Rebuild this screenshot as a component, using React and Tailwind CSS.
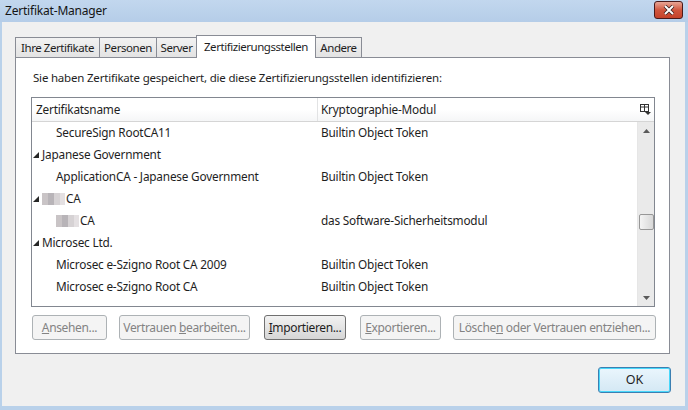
import React from "react"

const rows = [
  { level: 1, name: "SecureSign RootCA11", mod: "Builtin Object Token" },
  { level: 0, name: "Japanese Government", mod: "" },
  { level: 1, name: "ApplicationCA - Japanese Government", mod: "Builtin Object Token" },
  { level: 0, name: "CA", blur: true, mod: "" },
  { level: 1, name: "CA", blur: true, mod: "das Software-Sicherheitsmodul" },
  { level: 0, name: "Microsec Ltd.", mod: "" },
  { level: 1, name: "Microsec e-Szigno Root CA 2009", mod: "Builtin Object Token" },
  { level: 1, name: "Microsec e-Szigno Root CA", mod: "Builtin Object Token" },
]

function Twisty() {
  return (
    <svg width="6" height="6" viewBox="0 0 6 6" className="mr-[3px]">
      <path d="M6 0 L6 6 L0 6 Z" fill="#262626" />
    </svg>
  )
}

function Blur() {
  return (
    <span className="inline-flex h-[12px] mr-[1px]">
      <span className="w-[6px] bg-[#c9c4c6]" />
      <span className="w-[6px] bg-[#b8b4b8]" />
      <span className="w-[6px] bg-[#d6d2d4]" />
      <span className="w-[5px] bg-[#e4e0e2]" />
    </span>
  )
}

function Btn({ children, enabled, w }) {
  return (
    <div
      className={
        "h-[25px] flex items-center justify-center rounded-[3px] border whitespace-nowrap " +
        w +
        (enabled
          ? " border-[#707070] bg-gradient-to-b from-[#f2f2f2] to-[#d6d6d6] text-[#1e1e1e]"
          : " border-[#adb2b5] bg-[#f4f4f4] text-[#838383]")
      }
    >
      {children}
    </div>
  )
}

const tabCls = "h-[20px] flex items-center justify-center whitespace-nowrap border-[#898c95] bg-gradient-to-b from-[#f2f2f2] to-[#e3e3e3]"

export default function App() {
  return (
    <div
      className="w-[688px] h-[410px] flex flex-col bg-[#b9d1ea] text-[12px] text-[#1e1e1e] overflow-hidden"
      style={{ fontFamily: '"Noto Sans", "Open Sans", sans-serif' }}
    >
      {/* title bar */}
      <div className="h-[22px] flex items-center justify-between bg-gradient-to-b from-[#c2d7ee] to-[#b5cde8]">
        <span className="pl-[5px] text-[12px] text-[#141414] tracking-[-0.2px]">Zertifikat-Manager</span>
        <div className="mr-[5px] mt-[-2px] w-[29px] h-[18px] rounded-[3px] border border-[#4a1a1a] bg-gradient-to-b from-[#e7a596] via-[#d0563e] to-[#c4422a] flex items-center justify-center">
          <svg width="12" height="10" viewBox="0 0 12 10">
            <path d="M2 1 L10 9 M10 1 L2 9" stroke="#3b2020" strokeWidth="3.6" />
            <path d="M2 1 L10 9 M10 1 L2 9" stroke="#fff" strokeWidth="2" />
          </svg>
        </div>
      </div>

      {/* body */}
      <div className="flex-1 ml-[2px] mr-[3px] mb-[4px] bg-[#f0f0f0] pl-[13px] pt-[13px] flex flex-col">
        {/* tabs */}
        <div className="flex items-end h-[22px] relative z-10 text-[11.5px] tracking-[-0.45px]">
          <div className={tabCls + " border border-r-0 border-b-0 w-[84px]"}>Ihre Zertifikate</div>
          <div className={tabCls + " border border-r-0 border-b-0 w-[57px]"}>Personen</div>
          <div className={tabCls + " border border-b-0 w-[41px]"}>Server</div>
          <div className="h-[23px] mb-[-1px] ml-[-1px] w-[120px] flex items-start justify-center pt-[2px] whitespace-nowrap border border-b-0 border-[#898c95] bg-white">Zertifizierungsstellen</div>
          <div className={tabCls + " border border-l-0 border-b-0 w-[46px]"}>Andere</div>
        </div>

        {/* panel */}
        <div className="w-[655px] h-[297px] border border-[#898c95] bg-white flex flex-col pl-[15px]">
          <div className="h-[39px] flex items-center pl-[2px] pt-[1px] text-[11.5px] tracking-[-0.2px] whitespace-nowrap">
            Sie haben Zertifikate gespeichert, die diese Zertifizierungsstellen identifizieren:
          </div>

          {/* tree */}
          <div className="w-[624px] h-[210px] border border-[#828790] flex flex-col text-[11.8px] tracking-[-0.2px]">
            <div className="h-[24px] flex border-b border-[#d5d5d5] bg-gradient-to-b from-white via-white to-[#f5f6f7]">
              <div className="w-[286px] flex items-center pl-[4px] border-r border-[#e2e3e4]">Zertifikatsname</div>
              <div className="flex-1 flex items-center pl-[3px]">Kryptographie-Modul</div>
              <div className="w-[17px] flex items-center justify-center">
                <svg width="11" height="11" viewBox="0 0 11 11">
                  <rect x="0.5" y="0.5" width="8" height="7" fill="none" stroke="#333" />
                  <path d="M0.5 3 H8.5 M4.5 0.5 V7.5" stroke="#333" />
                  <path d="M5 8 H11 L8 11 Z" fill="#333" />
                </svg>
              </div>
            </div>
            <div className="flex-1 flex">
              <div className="flex-1 flex flex-col">
                {rows.map((r, i) => (
                  <div key={i} className="h-[22px] flex items-center whitespace-nowrap">
                    <div className={"w-[289px] flex items-center " + (r.level ? "pl-[24px]" : "pl-[1px]")}>
                      {r.level === 0 && <Twisty />}
                      {r.blur && <Blur />}
                      <span>{r.name}</span>
                    </div>
                    <div className="flex-1">{r.mod}</div>
                  </div>
                ))}
              </div>
              {/* scrollbar */}
              <div className="w-[17px] bg-[#eaeaea] border-l border-[#e6e6e6] flex flex-col items-center">
                <div className="h-[17px] flex items-center justify-center">
                  <svg width="7" height="4" viewBox="0 0 7 4"><path d="M0 4 L3.5 0 L7 4 Z" fill="#5a5a5a" /></svg>
                </div>
                <div className="h-[75px]" />
                <div className="w-[15px] h-[16px] rounded-[2px] border border-[#979797] bg-gradient-to-r from-[#f4f4f4] to-[#d8d8d8]" />
                <div className="flex-1" />
                <div className="h-[17px] flex items-center justify-center">
                  <svg width="7" height="4" viewBox="0 0 7 4"><path d="M0 0 L7 0 L3.5 4 Z" fill="#5a5a5a" /></svg>
                </div>
              </div>
            </div>
          </div>

          {/* buttons */}
          <div className="flex mt-[8px] tracking-[-0.35px] text-[12px]">
            <Btn w="w-[75px] ml-[1px]"><span><u>A</u>nsehen...</span></Btn>
            <Btn w="w-[131px] ml-[12px]"><span>Vertrauen <u>b</u>earbeiten...</span></Btn>
            <Btn enabled w="w-[82px] ml-[14px]"><span><u>I</u>mportieren...</span></Btn>
            <Btn w="w-[81px] ml-[14px]"><span><u>E</u>xportieren...</span></Btn>
            <Btn w="w-[203px] ml-[12px]"><span>Lösche<u>n</u> oder Vertrauen entziehen...</span></Btn>
          </div>
        </div>

        {/* OK */}
        <div className="flex justify-end mt-[13px] pr-[14px]">
          <div className="w-[73px] h-[26px] rounded-[3px] border border-[#3c7fb1] shadow-[inset_0_0_0_1px_#48d8fb] bg-gradient-to-b from-[#eaf6fd] to-[#d4e8f4] flex items-center justify-center text-[12.5px]">
            OK
          </div>
        </div>
      </div>
    </div>
  )
}
